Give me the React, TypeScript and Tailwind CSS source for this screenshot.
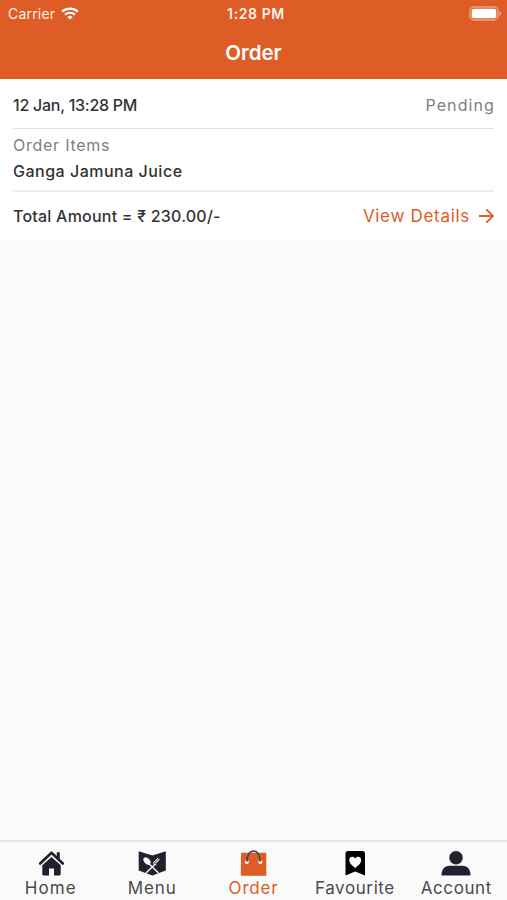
import type { ReactNode } from "react";

function WifiIcon() {
  return (
    <svg width="18" height="13" viewBox="0 0 18 13" fill="none" stroke="#fff" strokeWidth="2.2">
      <path d="M1.1 4.6C5.5.6 12.5.6 16.9 4.6" />
      <path d="M4.1 7.6C6.9 5.1 11.1 5.1 13.9 7.6" />
      <path d="M6.3 9.9C7.9 8.4 10.1 8.4 11.7 9.9L9 12.6Z" fill="#fff" stroke="none" />
    </svg>
  );
}

function BatteryIcon() {
  return (
    <svg width="33" height="15" viewBox="0 0 33 15" fill="none">
      <rect x="1" y="1" width="28" height="13" rx="4" stroke="#fff" strokeOpacity=".45" strokeWidth="1.3" />
      <rect x="2.7" y="2.7" width="24.6" height="9.6" rx="2" fill="#fff" />
      <path d="M30.5 5v5c1.9-.8 1.9-4.2 0-5z" fill="#fff" fillOpacity=".6" />
    </svg>
  );
}

function HomeIcon() {
  return (
    <svg width="28" height="28" viewBox="0 0 28 28" fill="none">
      <path d="M19.8 2.3h3v7l-3-2.7z" fill="#20202f" />
      <path d="M3.2 13.5L14.500 2.700 25.800 13.500" stroke="#20202f" strokeWidth="2.6" strokeLinecap="round" strokeLinejoin="round" />
      <path d="M5.300 15.300L14.500 6.900l9.200 8.400V24q0 1.500-1.500 1.500H17v-7h-5v7H6.800Q5.300 25.500 5.300 24z" fill="#20202f" />
    </svg>
  );
}

function MenuIcon() {
  return (
    <svg width="28" height="28" viewBox="0 0 28 28" fill="none">
      <path d="M.7 1.2L14.400 5.400l13.400-4.200v19.300L14.400 25.400.7 20.500z" fill="#20202f" />
      <ellipse cx="9" cy="11" rx="2.8" ry="4.3" fill="#fafafa" transform="rotate(-43 9 11)" />
      <path d="M10.500 13.200L20.500 23M17.500 13.700L8 23" stroke="#fafafa" strokeWidth="1.4" />
      <path d="M16 12.200l4-4.200M17.600 13.700l4-4.200M15.800 12c-.5 2 1 3.200 2.500 2.700M17 12.700l3.800-4" stroke="#fafafa" strokeWidth="1" />
    </svg>
  );
}

function BagIcon() {
  return (
    <svg width="28" height="28" viewBox="0 0 28 28" fill="none">
      <path d="M1 2.800h25.300v23H.8z" fill="#de5c25" />
      <circle cx="6.800" cy="12" r="2" fill="#fff" />
      <circle cx="20.300" cy="12" r="2" fill="#fff" />
      <path d="M6.800 11.700C7.300 5.700 9.500.9 13.600.9s6.200 4.800 6.700 10.800" stroke="#34414d" strokeWidth="1.5" />
    </svg>
  );
}

function BookmarkIcon() {
  return (
    <svg width="28" height="28" viewBox="0 0 28 28">
      <path d="M4.5 3.500q0-2.500 2.500-2.500h14.500q2.500 0 2.500 2.500v21.900L14.200 21.500l-9.700 3.900z" fill="#000" />
      <path d="M14.200 18C10.200 15 8.200 12.800 8.200 10.300c0-4 4.500-4.500 6-1.500 1.500-3 6-2.500 6 1.500 0 2.500-2 4.700-6 7.700z" fill="#fff" />
    </svg>
  );
}

function PersonIcon() {
  return (
    <svg width="30" height="28" viewBox="0 0 30 28" fill="#20202f">
      <circle cx="15" cy="7.700" r="6.800" />
      <path d="M.5 25.500C.5 19.300 3.500 15.700 8.500 15.700h13c5 0 8 3.600 8 9.800z" />
    </svg>
  );
}

function Tab({ icon, label, className }: { icon: ReactNode; label: string; className: string }) {
  return (
    <div className="flex min-w-0 flex-1 flex-col items-center pt-[8px]">
      <div className="h-[28px] shrink-0">{icon}</div>
      <span className={`whitespace-nowrap text-[17px] leading-[21px] ${className}`}>{label}</span>
    </div>
  );
}

export default function App() {
  return (
    <div className="flex h-[900px] w-[507px] flex-col overflow-hidden bg-[#fafafa] font-['Inter',sans-serif] text-[#333]">
      <header className="h-[79px] shrink-0 bg-[#de5c25] text-white">
        <div className="grid h-[27px] grid-cols-3 items-center pl-2 pr-[5px]">
          <div className="flex items-center gap-[6px] text-[14px] leading-[20px] text-white/90">
            <span className="tracking-[0.2px]">Carrier</span>
            <WifiIcon />
          </div>
          <span className="pl-[2px] text-center text-[14px] font-semibold leading-[20px] tracking-[0.6px] text-white/95">1:28 PM</span>
          <div className="flex justify-end">
            <BatteryIcon />
          </div>
        </div>
        <h1 className="text-center text-[20.5px] font-semibold leading-[51px]">Order</h1>
      </header>
      <main className="h-[162px] shrink-0 bg-white px-[13px]">
        <div className="flex h-[50px] items-center justify-between border-b border-[#e2e2e2] pt-[3px]">
          <span className="text-[16px] font-medium tracking-[-0.25px]">12 Jan, 13:28 PM</span>
          <span className="-mr-[1px] text-[16px] tracking-[1.1px] text-[#808080]">Pending</span>
        </div>
        <div className="flex h-[63px] flex-col border-b-2 border-[#ececec] pt-[4px]">
          <span className="text-[16px] leading-[25px] tracking-[0.75px] text-[#808080]">Order Items</span>
          <span className="text-[16px] font-medium leading-[26px] tracking-[0.5px]">Ganga Jamuna Juice</span>
        </div>
        <div className="flex h-[48px] items-center justify-between">
          <span className="text-[16px] font-medium tracking-[0.22px]">Total Amount = ₹ 230.00/-</span>
          <a className="flex items-center gap-[9px] text-[17px] tracking-[0.7px] text-[#de5c25]">
            <span className="leading-[24px]">View Details</span>
            <svg width="15" height="16" viewBox="0 0 15 16" fill="none" stroke="currentColor" strokeWidth="1.9">
              <path d="M0 8h13.5M7.3 1.3L13.9 8l-6.6 6.7" />
            </svg>
          </a>
        </div>
      </main>
      <div className="flex-1" />
      <nav className="flex h-[60px] shrink-0 border-t-2 border-[#e5e5e5]">
        <Tab icon={<HomeIcon />} label="Home" className="tracking-[1.1px] text-[#4a4a4a]" />
        <Tab icon={<MenuIcon />} label="Menu" className="tracking-[0.9px] text-[#4a4a4a]" />
        <Tab icon={<BagIcon />} label="Order" className="tracking-[0.8px] text-[#de5c25]" />
        <Tab icon={<BookmarkIcon />} label="Favourite" className="tracking-[0.6px] text-[#4a4a4a]" />
        <Tab icon={<PersonIcon />} label="Account" className="tracking-[0.6px] text-[#4a4a4a]" />
      </nav>
    </div>
  );
}
